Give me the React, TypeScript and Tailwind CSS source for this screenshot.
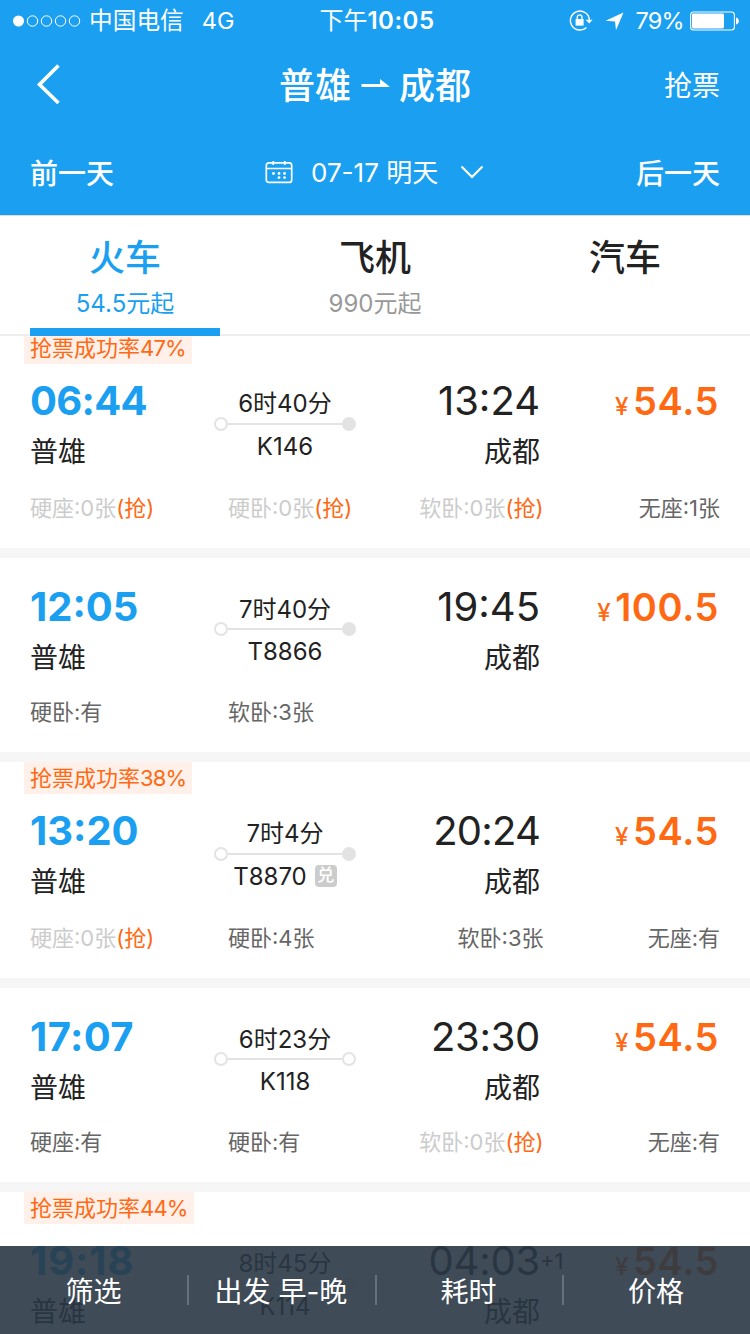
import type { ReactNode } from "react";

type Seat = { text: string; kind: "none" | "some" };

type Train = {
  rate?: string;
  depart: string;
  departTracking?: string;
  arrive: string;
  arriveTracking?: string;
  plus?: string;
  duration: string;
  code: string;
  exchange?: boolean;
  endOpen?: boolean;
  price: string;
  seats: (Seat | null)[];
};

const none = (text: string): Seat => ({ text, kind: "none" });
const some = (text: string): Seat => ({ text, kind: "some" });

const trains: Train[] = [
  {
    rate: "47%",
    depart: "06:44",
    departTracking: "tracking-[-0.7px]",
    arrive: "13:24",
    duration: "6时40分",
    code: "K146",
    price: "54.5",
    seats: [none("硬座:0张"), none("硬卧:0张"), none("软卧:0张"), some("无座:1张")],
  },
  {
    depart: "12:05",
    arrive: "19:45",
    duration: "7时40分",
    code: "T8866",
    price: "100.5",
    seats: [some("硬卧:有"), some("软卧:3张"), null, null],
  },
  {
    rate: "38%",
    depart: "13:20",
    arrive: "20:24",
    arriveTracking: "-mr-px pr-px tracking-[-0.8px]",
    duration: "7时4分",
    code: "T8870",
    exchange: true,
    price: "54.5",
    seats: [none("硬座:0张"), some("硬卧:4张"), some("软卧:3张"), some("无座:有")],
  },
  {
    depart: "17:07",
    departTracking: "tracking-[0.4px]",
    arrive: "23:30",
    arriveTracking: "tracking-[-0.3px]",
    duration: "6时23分",
    code: "K118",
    endOpen: true,
    price: "54.5",
    seats: [some("硬座:有"), some("硬卧:有"), none("软卧:0张"), some("无座:有")],
  },
  {
    rate: "44%",
    depart: "19:18",
    departTracking: "tracking-[0.9px]",
    arrive: "04:03",
    arriveTracking: "tracking-[-0.2px]",
    plus: "+1",
    duration: "8时45分",
    code: "K114",
    price: "54.5",
    seats: [some("硬座:有"), some("硬卧:有"), some("软卧:有"), some("无座:有")],
  },
];

function StatusBar() {
  return (
    <div className="flex h-10 items-center pt-0.5 text-[24px] leading-[38px]">
      <div className="flex w-[250px] items-center pl-3">
        <svg width="70" height="14" viewBox="0 0 70 14" fill="none" stroke="#fff">
          <circle cx="6.5" cy="7" r="5.5" fill="#fff" stroke="none" />
          <circle cx="20.5" cy="7" r="5.2" />
          <circle cx="34.5" cy="7" r="5.2" />
          <circle cx="48.5" cy="7" r="5.2" />
          <circle cx="62.5" cy="7" r="5.2" />
        </svg>
        <span className="ml-[7px] text-[23.7px]">中国电信</span>
        <span className="ml-[18px] text-[23.5px]">4G</span>
      </div>
      <div className="w-[250px] pl-1 text-center font-semibold tracking-[0.5px]">
        <span className="font-normal tracking-normal">下午</span>10:05
      </div>
      <div className="flex w-[250px] items-center justify-end pr-[10px]">
        <svg width="24" height="22" viewBox="0 0 24 22" fill="none" stroke="#fff" strokeWidth="1.4">
          <path d="M17.5 17.4A9.5 9.5 0 1 1 20.4 10" />
          <path d="M16.6 9.800h7L20.200 13.600z" fill="#fff" stroke="none" />
          <rect x="6.6" y="9" width="8" height="6.6" fill="#fff" stroke="none" />
          <path d="M8.2 9.800V7.400a2.400 2.600 0 0 1 4.800 0v2.400" strokeWidth="1.3" />
        </svg>
        <svg className="ml-3" width="19" height="19" viewBox="0 0 19 19" fill="#fff">
          <path d="M18.5.5 11 18.200 10 9.600.5 8.800z" />
        </svg>
        <span className="ml-[11px] text-[23.500px] tracking-[-0.7px]">79%</span>
        <svg className="ml-[6px]" width="50" height="20" viewBox="0 0 50 20" fill="none">
          <rect x="0.6" y="1" width="43.8" height="18" rx="3" stroke="#fff" strokeWidth="1.1" />
          <rect x="2" y="2.6" width="32" height="14.8" rx="1.4" fill="#fff" />
          <path d="M46 6.6c3.8.4 3.8 6.4 0 6.8z" fill="#fff" />
        </svg>
      </div>
    </div>
  );
}

function Header() {
  return (
    <header className="h-[215px] bg-[#1b9ff1] text-white">
      <StatusBar />
      <div className="flex h-[88px] items-center">
        <div className="flex w-[250px] pl-9">
          <svg width="25" height="40" viewBox="0 0 25 40" fill="none" stroke="#fff" strokeWidth="3.6">
            <path d="M22.5 1.5 3.5 20.5 22.5 39" />
          </svg>
        </div>
        <div className="flex w-[250px] items-center justify-center text-[36px] leading-[48px] font-medium">
          <span className="pt-[3px]">普雄</span>
          <svg className="mx-[9px]" width="30" height="16" viewBox="0 0 30 16" fill="#fff">
            <path d="M1.5 8H20V3L29.5 10.6V11H1.5z" />
          </svg>
          <span className="pt-[3px]">成都</span>
        </div>
        <div className="w-[250px] pt-[3px] pr-[30px] text-right text-[28px]">抢票</div>
      </div>
      <div className="flex h-[87px] items-center text-[28px]">
        <div className="w-[250px] pt-[4px] pl-[30px] font-medium">前一天</div>
        <div className="flex w-[250px] items-center pl-[15px]">
          <svg width="28" height="24" viewBox="0 0 28 24" fill="none" stroke="#fff" strokeWidth="1.7">
            <rect x="1.3" y="2.8" width="25.4" height="19.6" rx="2.5" />
            <path d="M1.3 8.500h25.400M8.300 1v4M19.700 1v4" />
            <g fill="#fff" stroke="none">
              <circle cx="8.5" cy="13.500" r="1.400" />
              <circle cx="14" cy="13.500" r="1.400" />
              <circle cx="19.500" cy="13.500" r="1.400" />
              <circle cx="14" cy="17.600" r="1.400" />
              <circle cx="19.500" cy="17.600" r="1.400" />
            </g>
          </svg>
          <span className="ml-[18px] w-[129px] pt-0.5 text-[26px] leading-[38px] whitespace-nowrap">07-17 明天</span>
          <svg className="ml-5" width="24" height="14" viewBox="0 0 24 14" fill="none" stroke="#fff" strokeWidth="2.2">
            <path d="M1.5 1.5 12 12 22.500 1.5" />
          </svg>
        </div>
        <div className="w-[250px] pt-[4px] pr-[30px] text-right font-medium">后一天</div>
      </div>
    </header>
  );
}

function Tab({ title, sub, active }: { title: string; sub?: string; active?: boolean }) {
  return (
    <div
      className={
        active
          ? "relative flex h-full w-[250px] flex-col items-center pt-[18px] text-[#1b9ff1]"
          : "relative flex h-full w-[250px] flex-col items-center pt-[18px] text-[#222222]"
      }
    >
      <span className="text-[36px] leading-[48px] font-medium">{title}</span>
      {sub && (
        <span
          className={
            active
              ? "mt-[6px] text-[24px] leading-[32px]"
              : "mt-[6px] text-[24px] leading-[32px] text-[#999999]"
          }
        >
          {sub}
        </span>
      )}
      {active && <span className="absolute -bottom-0.5 left-[30px] h-2 w-[190px] bg-[#1b9ff1]" />}
    </div>
  );
}

function SeatCell({ seat, className }: { seat: Seat | null; className: string }) {
  return (
    <div className={className}>
      {seat && (
        <>
          <span className={seat.kind === "none" ? "text-[#cccccc]" : "text-[#666666]"}>{seat.text}</span>
          {seat.kind === "none" && <span className="text-[#ff6913]">(抢)</span>}
        </>
      )}
    </div>
  );
}

function TrainCard({ t }: { t: Train }) {
  return (
    <li className="mb-[10px] bg-white">
      {t.rate && (
        <div className="ml-6 h-8 w-fit bg-[#fff0e9] px-1.5 text-[22px] leading-[32px] text-[#ff6913]">
          抢票成功率<span className="tracking-[-0.8px]">{t.rate}</span>
        </div>
      )}
      <div className={t.rate ? "flex px-[30px] pt-[17px]" : "flex px-[30px] pt-[29px]"}>
        <div className="w-[184px]">
          <div className="text-[40px] leading-[40px] font-bold text-[#1b9ff1]">
            <span className={t.departTracking}>{t.depart}</span>
          </div>
          <div className="mt-[17px] text-[28px] leading-[28px]">普雄</div>
        </div>
        <div className="w-[142px] pt-[11px] text-center text-[24px] leading-[24px]">
          <div>{t.duration}</div>
          <div className={t.rate ? "mt-px flex items-center" : "flex items-center"}>
            <span className="size-3.5 rounded-full border-2 border-[#e3e3e3]" />
            <span className="h-0.5 flex-1 bg-[#e3e3e3]" />
            <span
              className={
                t.endOpen
                  ? "size-3.5 rounded-full border-2 border-[#e3e3e3]"
                  : "size-3.5 rounded-full bg-[#e3e3e3]"
              }
            />
          </div>
          <div className="mt-[4px] flex items-center justify-center">
            <span>{t.code}</span>
            {t.exchange && (
              <span className="-mt-0.5 ml-2 size-[22px] rounded-[4px] bg-[#cccccc] text-[17px] leading-[21px] font-medium text-white">
                兑
              </span>
            )}
          </div>
        </div>
        <div className="relative w-[184px] text-right">
          <div className="text-[40px] leading-[40px]">
            <span className={t.arriveTracking}>{t.arrive}</span>
          </div>
          {t.plus && <span className="absolute top-2 left-full text-[22px] leading-[24px]">{t.plus}</span>}
          <div className="mt-[17px] text-[28px] leading-[28px]">成都</div>
        </div>
        <div className="flex-1 pr-px text-right text-[38px] leading-[40px] font-semibold tracking-[0.6px] whitespace-nowrap text-[#ff6913]">
          <span className="mr-1 text-[24px] font-medium">¥</span>
          {t.price}
        </div>
      </div>
      <div
        className={
          t.rate
            ? "flex px-[30px] pt-[26px] pb-6 text-[22px] leading-[32px]"
            : "flex px-[30px] pt-6 pb-6 text-[22px] leading-[32px]"
        }
      >
        <SeatCell seat={t.seats[0]} className="w-[198px]" />
        <SeatCell seat={t.seats[1]} className="w-[158px]" />
        <SeatCell seat={t.seats[2]} className="w-[157.5px] text-right" />
        <SeatCell seat={t.seats[3]} className="flex-1 text-right" />
      </div>
    </li>
  );
}

function Filter({ children, className }: { children: ReactNode; className: string }) {
  return (
    <div className={className}>
      <span className="flex-1 pt-[3px] text-center">{children}</span>
    </div>
  );
}

function Divider() {
  return <span className="-mr-0.5 h-[30px] w-0.5 bg-[#66717c]" />;
}

export default function App() {
  return (
    <div className="relative flex h-[1334px] w-[750px] flex-col overflow-hidden bg-[#f6f6f6] font-['Inter','Noto_Sans_CJK_SC',sans-serif] text-[#222222]">
      <div className="relative z-10 shrink-0">
        <Header />
        <nav className="flex h-[121px] border-t border-b-2 border-t-[#dddddd] border-b-[#eeeeee] bg-white">
          <Tab title="火车" sub="54.5元起" active />
          <Tab title="飞机" sub="990元起" />
          <Tab title="汽车" />
        </nav>
      </div>
      <ul className="-mt-1 shrink-0">
        {trains.map((t) => (
          <TrainCard key={t.depart} t={t} />
        ))}
      </ul>
      <footer className="absolute inset-x-0 bottom-0 z-20 flex h-[88px] items-center bg-[#2a3745]/90 text-[28px] text-white">
        <Filter className="flex w-[187px]">筛选</Filter>
        <Divider />
        <Filter className="flex w-[188px]">出发 早-晚</Filter>
        <Divider />
        <Filter className="flex w-[187px]">耗时</Filter>
        <Divider />
        <Filter className="flex w-[188px]">价格</Filter>
      </footer>
    </div>
  );
}
